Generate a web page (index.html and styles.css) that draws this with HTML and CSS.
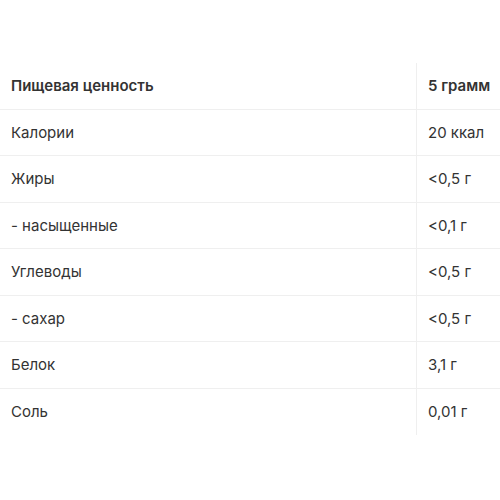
FILE: index.html
```html
<!DOCTYPE html>
<html lang="ru">
<head>
<meta charset="utf-8">
<link rel="stylesheet" href="styles.css">
</head>
<body>
<div class="table">
  <div class="row head"><div class="name">Пищевая ценность</div><div class="val">5 грамм</div></div>
  <div class="row"><div class="name">Калории</div><div class="val">20 ккал</div></div>
  <div class="row"><div class="name">Жиры</div><div class="val">&lt;0,5 г</div></div>
  <div class="row"><div class="name">- насыщенные</div><div class="val">&lt;0,1 г</div></div>
  <div class="row"><div class="name">Углеводы</div><div class="val">&lt;0,5 г</div></div>
  <div class="row"><div class="name">- сахар</div><div class="val">&lt;0,5 г</div></div>
  <div class="row"><div class="name">Белок</div><div class="val">3,1 г</div></div>
  <div class="row last"><div class="name">Соль</div><div class="val">0,01 г</div></div>
</div>
</body>
</html>
```

FILE: styles.css
```css
html, body {
  margin: 0;
  padding: 0;
  background: #fff;
}
body {
  padding-top: 63px;
  font-family: Inter, "Noto Sans", sans-serif;
  font-size: 15px;
  color: #333;
}
.table {
  display: flex;
  flex-direction: column;
}
.row {
  display: grid;
  grid-template-columns: 416px 84px;
  height: 46.5px;
  box-sizing: border-box;
  border-bottom: 1px solid #efefef;
}
.row.last {
  border-bottom: none;
}
.name, .val {
  display: flex;
  align-items: center;
  padding-left: 11px;
}
.val {
  border-left: 1px solid #efefef;
  padding-left: 11px;
}
.head {
  font-weight: 600;
}
```
